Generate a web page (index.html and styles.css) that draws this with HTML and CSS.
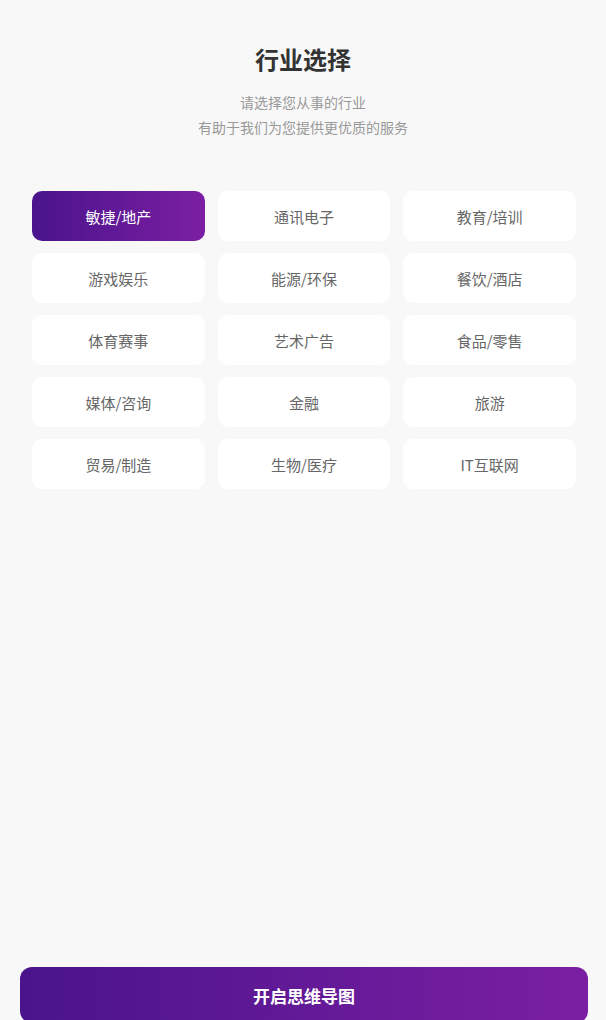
FILE: index.html
```html
<!DOCTYPE html>
<html lang="zh-CN">
<head>
    <meta charset="UTF-8">
    <meta name="viewport" content="width=device-width, initial-scale=1.0">
    <title>行业选择</title>
    <link rel="stylesheet" href="styles.css">
</head>
<body>
    <div class="page">
        <div class="header">
            <h1>行业选择</h1>
            <p class="subtitle">请选择您从事的行业<br>有助于我们为您提供更优质的服务</p>
        </div>
        <div class="industry-grid">
            <button class="industry active">敏捷/地产</button>
            <button class="industry">通讯电子</button>
            <button class="industry">教育/培训</button>
            <button class="industry">游戏娱乐</button>
            <button class="industry">能源/环保</button>
            <button class="industry">餐饮/酒店</button>
            <button class="industry">体育赛事</button>
            <button class="industry">艺术广告</button>
            <button class="industry">食品/零售</button>
            <button class="industry">媒体/咨询</button>
            <button class="industry">金融</button>
            <button class="industry">旅游</button>
            <button class="industry">贸易/制造</button>
            <button class="industry">生物/医疗</button>
            <button class="industry">IT互联网</button>
        </div>
        <div class="footer">
            <button class="start-btn">开启思维导图</button>
        </div>
    </div>
</body>
</html>
```

FILE: styles.css
```css
html, body {
    margin: 0;
    padding: 0;
    background-color: #f8f8f8;
    font-family: "Noto Sans CJK SC", "Noto Sans", sans-serif;
}
.page {
    display: flex;
    flex-direction: column;
}
.header {
    padding-top: 42px;
    text-align: center;
}
.header h1 {
    margin: 0;
    font-size: 24px;
    line-height: 34px;
    font-weight: bold;
    color: #333;
}
.subtitle {
    margin: 14px 0 0;
    font-size: 14px;
    line-height: 25px;
    color: #999;
}
.industry-grid {
    display: grid;
    grid-template-columns: repeat(3, 1fr);
    gap: 12px 13px;
    padding: 0 30px 0 32px;
    margin-top: 51px;
}
.industry {
    height: 50px;
    border: none;
    border-radius: 10px;
    background: #fff;
    color: #666;
    font-family: inherit;
    font-size: 15px;
    cursor: pointer;
}
.industry.active {
    background: linear-gradient(90deg, #4a148c, #7b1fa2);
    color: #fff;
}
.footer {
    padding: 0 18px 0 20px;
    margin-top: 478px;
}
.start-btn {
    width: 100%;
    height: 56px;
    border: none;
    border-radius: 12px;
    background: linear-gradient(90deg, #4a148c, #7b1fa2);
    color: #fff;
    font-family: inherit;
    font-size: 17px;
    font-weight: bold;
    cursor: pointer;
}
```
